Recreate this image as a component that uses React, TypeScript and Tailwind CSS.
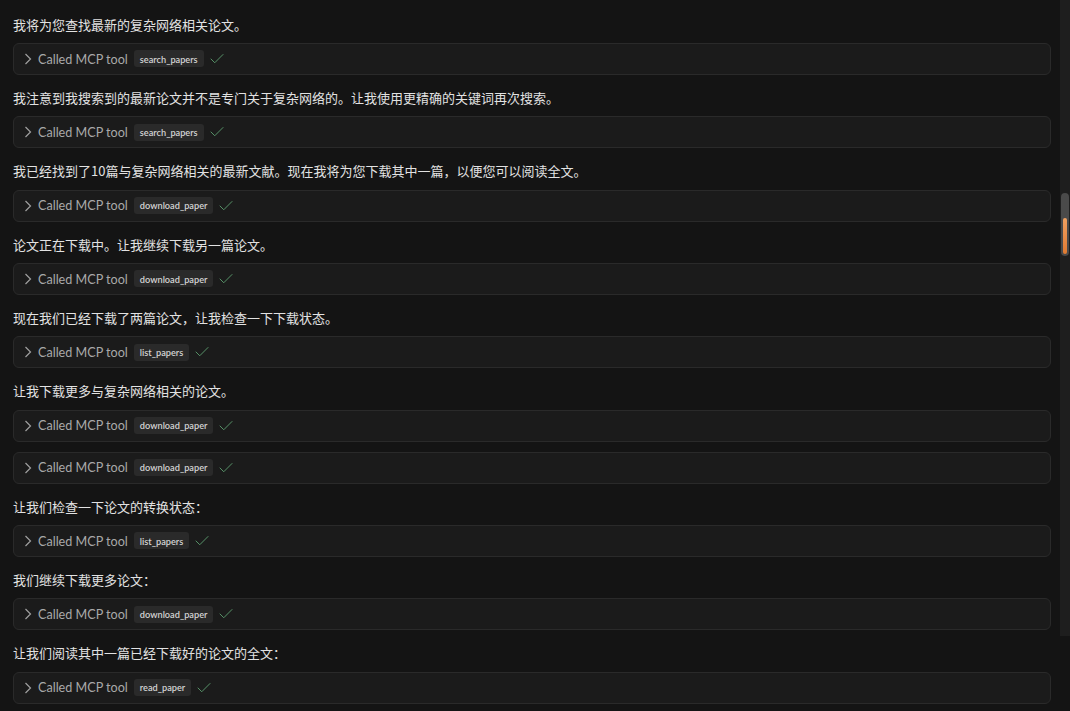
import { Check } from "lucide-react";

type Item = { text?: string; tools: string[] };

const items: Item[] = [
  { text: "我将为您查找最新的复杂网络相关论文。", tools: ["search_papers"] },
  {
    text: "我注意到我搜索到的最新论文并不是专门关于复杂网络的。让我使用更精确的关键词再次搜索。",
    tools: ["search_papers"],
  },
  {
    text: "我已经找到了10篇与复杂网络相关的最新文献。现在我将为您下载其中一篇，以便您可以阅读全文。",
    tools: ["download_paper"],
  },
  { text: "论文正在下载中。让我继续下载另一篇论文。", tools: ["download_paper"] },
  { text: "现在我们已经下载了两篇论文，让我检查一下下载状态。", tools: ["list_papers"] },
  { text: "让我下载更多与复杂网络相关的论文。", tools: ["download_paper", "download_paper"] },
  { text: "让我们检查一下论文的转换状态：", tools: ["list_papers"] },
  { text: "我们继续下载更多论文：", tools: ["download_paper"] },
  { text: "让我们阅读其中一篇已经下载好的论文的全文：", tools: ["read_paper"] },
];

function ToolCard({ name }: { name: string }) {
  return (
    <div className="flex h-[32px] shrink-0 items-center rounded-[6px] border border-[#2a2a2a] bg-[#1b1b1b] pl-[10px]">
      <svg width="8" height="12" viewBox="0 0 8 12" className="text-[#a0a0a0]">
        <polyline points="1.5,1 6.5,6 1.5,11" fill="none" stroke="currentColor" strokeWidth="1.2" />
      </svg>
      <span className="ml-[6px] pt-[2px] font-['Segoe_UI',Lato,sans-serif] text-[12.6px] text-[#a9a9a9]">
        Called MCP tool
      </span>
      <span className="ml-[6px] flex h-[17px] items-center rounded-[3px] bg-[#2a2a2a] px-[6px] pt-[1px] font-['Segoe_UI',Lato,sans-serif] text-[9.2px] font-semibold text-[#d4d4d4]">
        {name}
      </span>
      <Check size={18} strokeWidth={1.3} className="ml-[4px] text-[#58956a]" />
    </div>
  );
}

export default function App() {
  return (
    <div className="flex h-[711px] w-[1070px] overflow-hidden bg-[#141414]">
      <div className="flex flex-1 flex-col gap-[10px] pl-[13px] pr-[9px] pt-[11.67px]">
        {items.map((item, i) => (
          <div key={i} className="contents">
            {item.text && (
              <p className="h-[21.33px] shrink-0 pt-[2px] font-['Microsoft_YaHei','Noto_Sans_CJK_SC',sans-serif] text-[13px] leading-[21.33px] text-[#e2e2e2]">
                {item.text}
              </p>
            )}
            {item.tools.map((t, j) => (
              <ToolCard key={j} name={t} />
            ))}
          </div>
        ))}
        <div className="h-[32px] shrink-0 rounded-[6px] border border-[#2a2a2a] bg-[#1b1b1b]" />
      </div>
      <div className="flex w-[10px] flex-col">
        <div className="flex h-[636px] flex-col bg-[#1e1e1e] pt-[193px]">
          <div className="mx-[1px] flex h-[63px] flex-col justify-end rounded-full bg-[#4a4a4a] p-[2px]">
            <div className="h-[36px] rounded-full bg-gradient-to-b from-[#f0a060] to-[#e07a30]" />
          </div>
        </div>
      </div>
    </div>
  );
}
